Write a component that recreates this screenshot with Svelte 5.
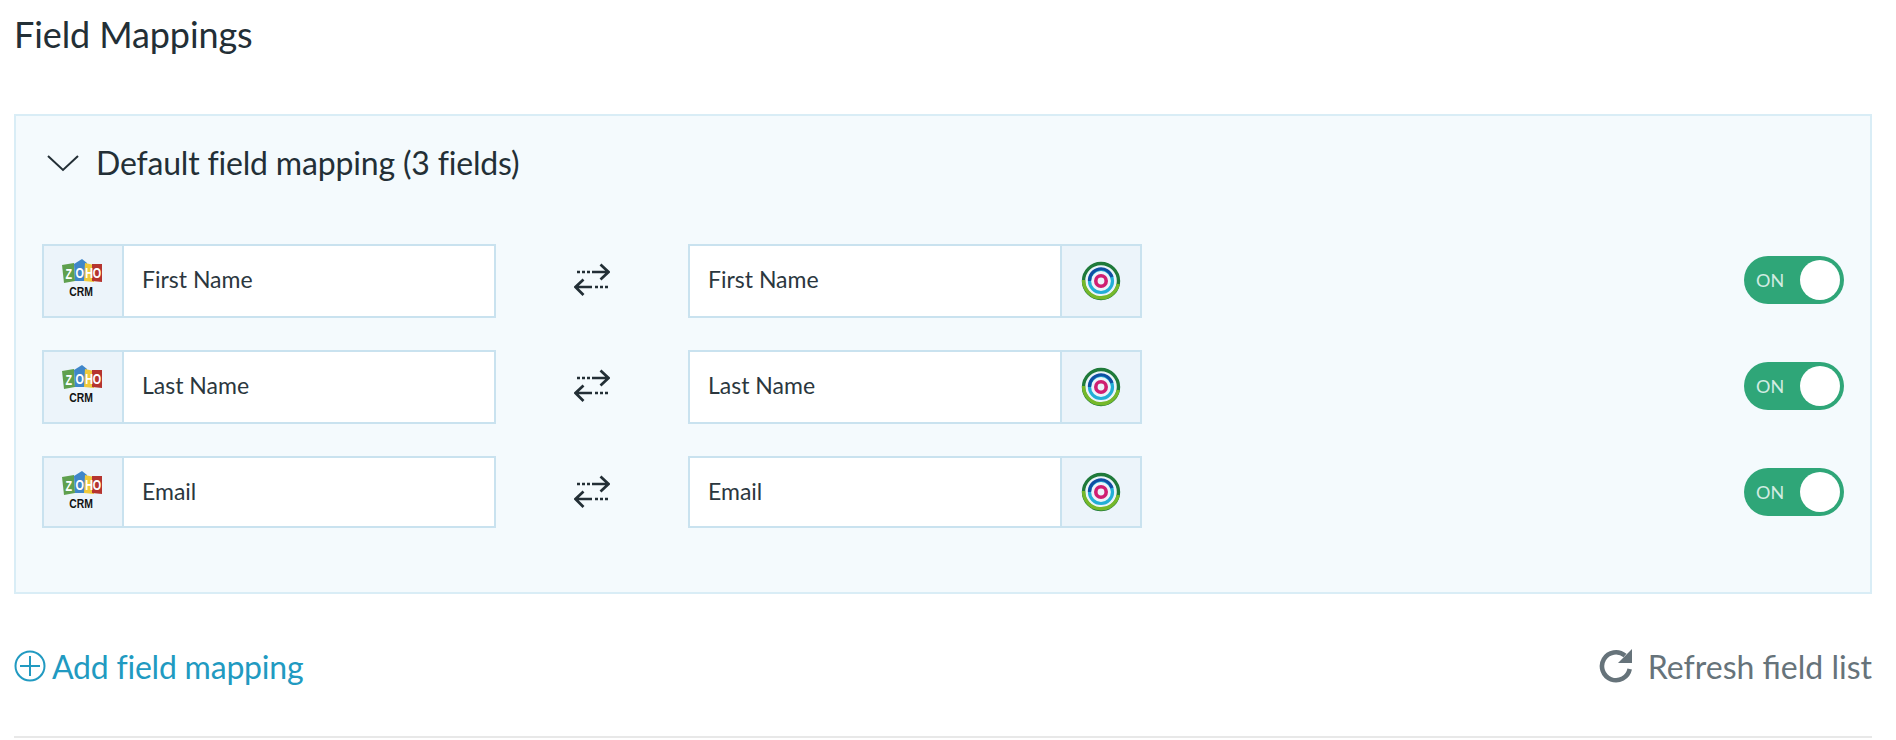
<script>
  const rows = ['First Name', 'Last Name', 'Email'];
</script>

{#snippet zoho()}
  <svg class="logo" width="42" height="40" viewBox="0 0 42 40">
    <path d="M1 6l12-2 1 18-11 2z" fill="#5fa04e"/>
    <path d="M13 5l8-5 5 4-1 18-11 0z" fill="#3f86c9"/>
    <path d="M24 4l9 2 0 17-10-1z" fill="#f0c93a"/>
    <path d="M31 5h10v18l-10-1z" fill="#b5342f"/>
    <g transform="scale(.72 1)">
      <text x="11" y="20" text-anchor="middle" class="z">Z</text>
      <text x="26" y="19" text-anchor="middle" class="z">O</text>
      <text x="39" y="19" text-anchor="middle" class="z">H</text>
      <text x="50" y="19" text-anchor="middle" class="z">O</text>
    </g>
    <text x="25" y="37" text-anchor="middle" class="crm" transform="scale(.8 1)">CRM</text>
  </svg>
{/snippet}

{#snippet target()}
  <svg width="40" height="42" viewBox="0 0 40 42">
    <circle cx="20" cy="21" r="17.5" fill="none" stroke="#1f7a3a" stroke-width="3.4"/>
    <path d="M2.6 20A17.5 17.5 0 0 0 37.2 24" fill="none" stroke="#76b82a" stroke-width="3.4"/>
    <circle cx="20" cy="21" r="11.5" fill="none" stroke="#22aed6" stroke-width="3.2"/>
    <path d="M8.5 21A11.5 11.5 0 0 1 31 17" fill="none" stroke="#0f4fa3" stroke-width="3.2"/>
    <circle cx="20" cy="21" r="5.2" fill="none" stroke="#cf1f72" stroke-width="3.6"/>
  </svg>
{/snippet}

<main class="page">
  <h1>Field Mappings</h1>

  <section class="panel">
    <header class="panel-head">
      <svg width="32" height="20" viewBox="0 0 32 20"><path d="M1 3l15 14L31 3" fill="none" stroke="#232f36" stroke-width="2"/></svg>
      <h2>Default field mapping (3 fields)</h2>
    </header>

    <div class="rows">
      {#each rows as name}
        <div class="row">
          <div class="field left">
            <span class="badge">{@render zoho()}</span>
            <span class="label">{name}</span>
          </div>
          <svg class="swap" width="36" height="36" viewBox="0 0 36 36">
            <path d="M3 9h13" stroke="#232f36" stroke-width="2.700" stroke-dasharray="3 2" fill="none"/>
            <path d="M18 9h16M26.500 1.500l8 7.500l-8 7.500" stroke="#232f36" stroke-width="2.700" fill="none"/>
            <path d="M3 24h15M9.500 16.500l-8 7.500 8 8" stroke="#232f36" stroke-width="2.700" fill="none"/>
            <path d="M21 24h13" stroke="#232f36" stroke-width="2.700" stroke-dasharray="3 2" fill="none"/>
          </svg>
          <div class="field right">
            <span class="label">{name}</span>
            <span class="badge small">{@render target()}</span>
          </div>
          <div class="toggle"><span>ON</span><i></i></div>
        </div>
      {/each}
    </div>
  </section>

  <footer class="actions">
    <a class="add" href="#add">
      <svg width="32" height="32" viewBox="0 0 32 32"><circle cx="16" cy="16" r="14.500" fill="none" stroke="#219ac1" stroke-width="2"/><path d="M16 6v20M6 16h20" stroke="#219ac1" stroke-width="2"/></svg>
      Add field mapping
    </a>
    <a class="refresh" href="#refresh">
      <svg width="34" height="34" viewBox="0 0 34 34"><path d="M30.700 20A14 14 0 1 1 26 6.500" fill="none" stroke="#66737a" stroke-width="4.600"/><path d="M33 0v14H19z" fill="#66737a"/></svg>
      Refresh field list
    </a>
  </footer>
  <div class="rule"></div>
</main>

<style>
  :global(body) { margin: 0; background: #fff; }
  .page {
    box-sizing: border-box;
    width: 1896px;
    height: 740px;
    padding: 12px 24px 0 14px;
    font-family: Lato, "Open Sans", sans-serif;
    color: #232f36;
    overflow: hidden;
  }
  h1 { margin: 0; font-size: 36px; line-height: 44px; font-weight: 400; letter-spacing: -0.1px; }
  .panel {
    box-sizing: border-box;
    margin-top: 58px;
    height: 480px;
    padding: 0 26px;
    background: #f4fafd;
    border: 2px solid #d9edf6;
  }
  .panel-head { display: flex; align-items: center; gap: 17px; height: 96px; padding-left: 5px; }
  .panel-head svg { position: relative; top: -1px; }
  h2 { margin: 0; font-size: 32px; font-weight: 400; line-height: 40px; letter-spacing: -0.18px; position: relative; top: -1px; }
  .rows { display: flex; flex-direction: column; gap: 32px; margin-top: 32px; }
  .row { display: flex; align-items: center; height: 74px; }
  .field {
    box-sizing: border-box;
    width: 454px;
    height: 74px;
    display: flex;
    align-items: stretch;
    background: #fff;
    border: 2px solid #c9e2ef;
  }
  .row:last-child .field { height: 72px; align-self: flex-start; }
  .row:last-child .label { padding-bottom: 2px; }
  .row:last-child .logo { margin-bottom: 2px; }
  .badge {
    flex: none;
    display: flex;
    align-items: center;
    justify-content: center;
    box-sizing: border-box;
    width: 80px;
    background: #ecf4fa;
    border-right: 2px solid #c9e2ef;
  }
  .badge.small { border-right: 0; border-left: 2px solid #c9e2ef; }
  .logo { margin: 0 2px 4px 0; }
  .label { flex: 1; display: flex; align-items: center; padding: 0 0 4px 18px; font-size: 23px; color: #2b373e; }
  .swap { flex: none; margin: 0 78px 0 78px; }
  .toggle {
    box-sizing: border-box;
    margin: 0 0 2px auto;
    width: 100px;
    height: 48px;
    border-radius: 24px;
    background: #2fa678;
    display: flex;
    align-items: center;
    justify-content: space-between;
    padding: 0 4px 0 12px;
    color: #d3ece2;
    font-size: 18px;
  }
  .toggle i { width: 40px; height: 40px; border-radius: 50%; background: #fff; }
  .actions { display: flex; justify-content: space-between; align-items: center; height: 58px; margin-top: 43px; }
  .actions a { display: flex; align-items: center; text-decoration: none; font-size: 32px; }
  .add { color: #219ac1; gap: 6px; letter-spacing: -0.22px; }
  .refresh { color: #66737a; gap: 15px; }
  .rule { height: 2px; background: #e8e8e8; margin-top: 41px; }
  .logo .z { font: 700 15px "Liberation Sans", sans-serif; fill: #fff; }
  .logo .crm { font: 700 13px "Liberation Sans", sans-serif; fill: #111; }
</style>
